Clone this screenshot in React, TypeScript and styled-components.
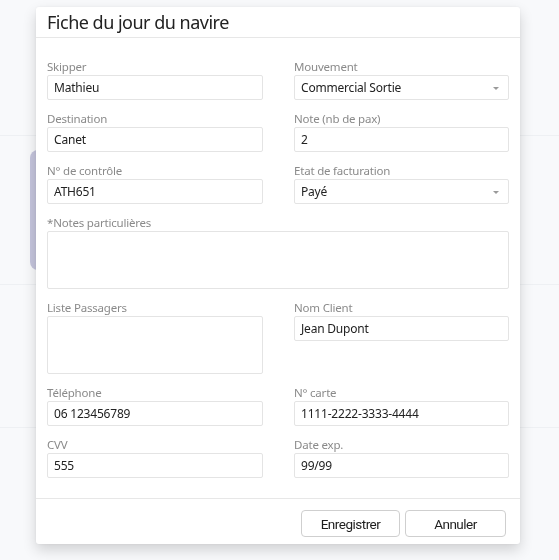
import React from "react";
import styled, { createGlobalStyle } from "styled-components";

const Global = createGlobalStyle`
  html, body { margin: 0; padding: 0; }
  body {
    background: #f7f8fa;
    font-family: "Noto Sans", "Open Sans", sans-serif;
    width: 559px;
    height: 560px;
    overflow: hidden;
  }
`;

const Backdrop = styled.div`
  width: 559px;
  height: 560px;
  display: flex;
  flex-direction: column;
  background: #f8f9fb;
`;

const BgRow = styled.div<{ $h: number }>`
  height: ${(p) => p.$h}px;
  border-bottom: 1px solid #eef0f3;
  display: flex;
  align-items: center;
`;

const BgTab = styled.div`
  margin-left: 30px;
  width: 10px;
  height: 120px;
  background: #c5c5dd;
  border-radius: 8px 0 0 8px;
`;

const Dialog = styled.div`
  position: fixed;
  left: 36px;
  top: 7px;
  width: 484px;
  background: #fff;
  border-radius: 3px;
  box-shadow: 0 6px 14px rgba(0, 0, 0, 0.16), 0 0 3px rgba(0, 0, 0, 0.06);
  display: flex;
  flex-direction: column;
`;

const Header = styled.div`
  height: 30px;
  border-bottom: 1px solid #e7e7e7;
  padding-left: 11px;
  display: flex;
  align-items: center;
`;

const Title = styled.h1`
  margin: 0;
  font-family: "Noto Sans", sans-serif;
  font-weight: 400;
  font-size: 18px;
  color: #222;
  letter-spacing: -0.5px;
`;

const Body = styled.div`
  padding: 21px 11px 20px 11px;
  display: grid;
  grid-template-columns: 216px 215px;
  column-gap: 31px;
  row-gap: 11px;
`;

const Field = styled.div<{ $span?: boolean }>`
  display: flex;
  flex-direction: column;
  grid-column: ${(p) => (p.$span ? "1 / span 2" : "auto")};
`;

const Label = styled.div`
  height: 16px;
  line-height: 16px;
  font-size: 11.5px;
  color: #8a8a8a;
  letter-spacing: -0.2px;
  white-space: nowrap;
`;

const Input = styled.div<{ $tall?: boolean }>`
  position: relative;
  height: ${(p) => (p.$tall ? 56 : 23)}px;
  border: 1px solid #e4e4e4;
  border-radius: 2px;
  padding: 0 6px;
  display: flex;
  align-items: ${(p) => (p.$tall ? "flex-start" : "center")};
  font-size: 12px;
  color: #222;
  letter-spacing: -0.2px;
`;

const Caret = styled.span`
  position: absolute;
  right: 9px;
  top: 11px;
  width: 0;
  height: 0;
  border-left: 3.5px solid transparent;
  border-right: 3.5px solid transparent;
  border-top: 3.5px solid #9a9a9a;
`;

const Footer = styled.div`
  border-top: 1px solid #e7e7e7;
  padding: 11px 14px 7px 0;
  display: flex;
  justify-content: flex-end;
  gap: 5px;
`;

const Button = styled.button<{ $w: number }>`
  width: ${(p) => p.$w}px;
  height: 27px;
  background: #fff;
  border: 1px solid #cfcfcf;
  border-radius: 4px;
  font-family: Roboto, sans-serif;
  font-size: 13.5px;
  color: #1e1e1e;
  letter-spacing: -0.5px;
  padding: 0;
`;

type F = { label: string; value?: string; select?: boolean; tall?: boolean; span?: boolean };

const fields: F[] = [
  { label: "Skipper", value: "Mathieu" },
  { label: "Mouvement", value: "Commercial Sortie", select: true },
  { label: "Destination", value: "Canet" },
  { label: "Note (nb de pax)", value: "2" },
  { label: "N° de contrôle", value: "ATH651" },
  { label: "Etat de facturation", value: "Payé", select: true },
  { label: "*Notes particulières", tall: true, span: true },
];

const fields2: F[] = [
  { label: "Téléphone", value: "06 123456789" },
  { label: "N° carte", value: "1111-2222-3333-4444" },
  { label: "CVV", value: "555" },
  { label: "Date exp.", value: "99/99" },
];

const FieldView = ({ f }: { f: F }) => (
  <Field $span={f.span}>
    <Label>{f.label}</Label>
    <Input $tall={f.tall}>
      {f.value}
      {f.select && <Caret />}
    </Input>
  </Field>
);

const RightStack = styled.div`
  display: flex;
  flex-direction: column;
  align-self: start;
`;

export default function App() {
  return (
    <>
      <Global />
      <Backdrop>
        <BgRow $h={135} />
        <BgRow $h={148}>
          <BgTab />
        </BgRow>
        <BgRow $h={142} />
      </Backdrop>
      <Dialog>
        <Header>
          <Title>Fiche du jour du navire</Title>
        </Header>
        <Body>
          {fields.map((f) => (
            <FieldView key={f.label} f={f} />
          ))}
          <FieldView f={{ label: "Liste Passagers", tall: true }} />
          <RightStack>
            <FieldView f={{ label: "Nom Client", value: "Jean Dupont" }} />
          </RightStack>
          {fields2.map((f) => (
            <FieldView key={f.label} f={f} />
          ))}
        </Body>
        <Footer>
          <Button $w={99}>Enregistrer</Button>
          <Button $w={101}>Annuler</Button>
        </Footer>
      </Dialog>
    </>
  );
}
